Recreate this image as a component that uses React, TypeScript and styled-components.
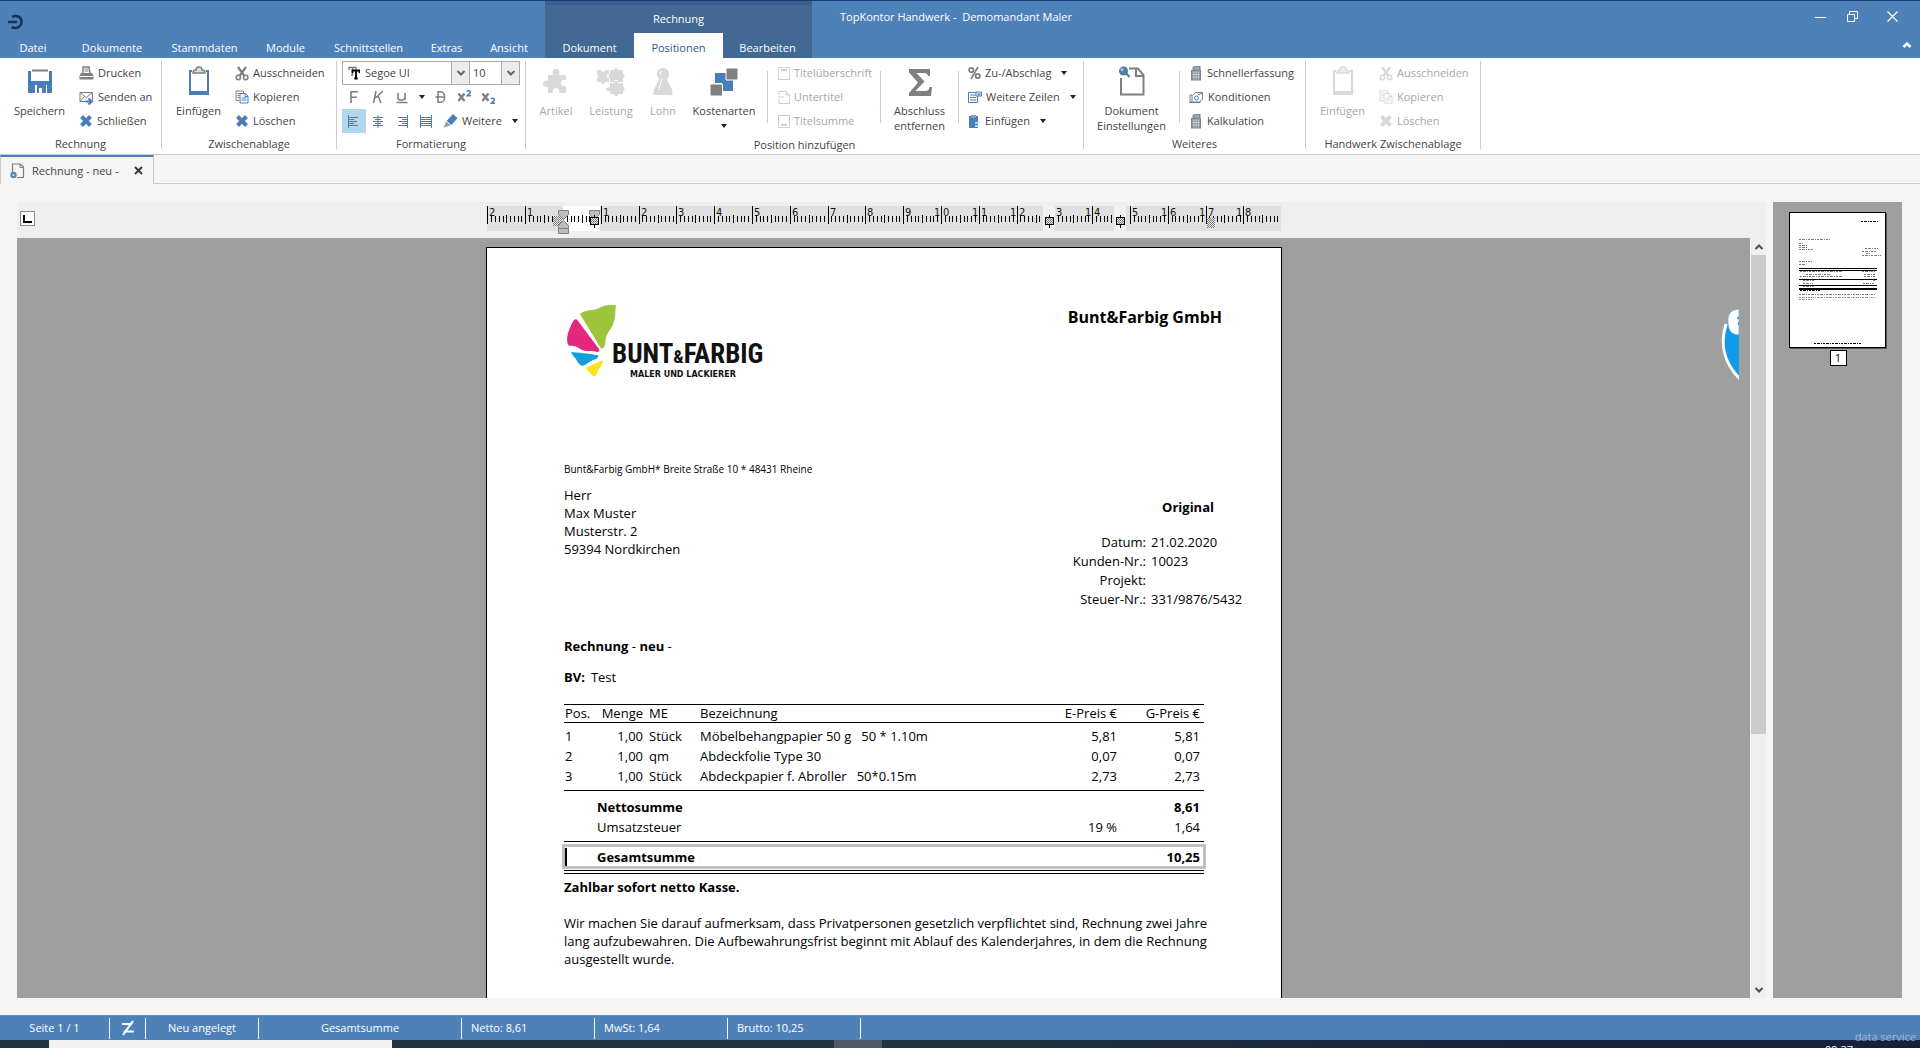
import React from "react";
import styled, { createGlobalStyle, css } from "styled-components";

const color = {
  blue: "#4f81b9",
  blueDark: "#426993",
  accent: "#4a7ebb",
  iconGrey: "#7f7f7f",
  iconOff: "#d9d9d9",
  text: "#444444",
  textOff: "#a6a6a6",
  line: "#cccccc",
  desk: "#9f9f9f",
  shell: "#f5f5f5",
};

const Global = createGlobalStyle`
  *, *::before, *::after { box-sizing: border-box; }
  html, body { margin: 0; overflow: hidden; }
  body, button, select {
    font-family: "Open Sans", "Noto Sans", sans-serif;
    font-size: 11px;
    line-height: 18px;
  }
  button { border: 0; padding: 0; margin: 0; background: none; color: inherit; cursor: default; }
  svg { display: block; flex: none; }
`;

/* ---------- window frame ---------- */

const Shell = styled.div`
  position: relative;
  display: flex;
  flex-direction: column;
  height: 100vh;
  background: ${color.shell};
  color: ${color.text};
`;

const TitleBar = styled.header`
  display: flex;
  flex: none;
  height: 58px;
  background: ${color.blue};
  border-top: 1px solid #143a78;
  color: #fff;
`;

const LeftHead = styled.div`
  display: flex;
  flex-direction: column;
  justify-content: space-between;
  width: 545px;
`;

const AppMark = styled.div`
  padding: 13px 0 0 8px;
`;

const TabRow = styled.nav`
  display: flex;
  height: 25px;
`;

const RibbonTab = styled.button<{ $w: number; $active?: boolean }>`
  width: ${(p) => p.$w}px;
  padding-top: 4px;
  ${(p) => p.$active && css`background: #fff; color: #2b579a;`}
`;

const ContextHead = styled.div`
  display: flex;
  flex-direction: column;
  justify-content: space-between;
  width: 267px;
  background: ${color.blueDark};
  border-top: 4px solid #3b5f8a;
  text-align: center;
`;

const ContextName = styled.div`
  padding-top: 5px;
`;

const WindowTitle = styled.h1`
  flex: 1;
  margin: 0;
  padding: 7px 0 0 28px;
  font-size: 11px;
  line-height: 18px;
  font-weight: 400;
  white-space: pre;
`;

const WindowSide = styled.div`
  display: flex;
  flex-direction: column;
  align-items: flex-end;
  justify-content: space-between;
  padding: 4px 5px 3px 0;
`;

const WindowButtons = styled.div`
  display: flex;
  gap: 8px;
  margin-right: 11px;
`;

const WinButton = styled.button`
  display: grid;
  place-items: center;
  width: 24px;
  height: 22px;
  & + & + & { margin-left: 8px; }
`;

const Collapse = styled(WinButton)`
  width: 16px;
  height: 20px;
`;

/* ---------- ribbon ---------- */

const Ribbon = styled.section`
  display: flex;
  flex: none;
  height: 97px;
  padding: 3px 0 5px;
  background: #fff;
  border-bottom: 1px solid ${color.line};
`;

const Group = styled.div<{ $w: number }>`
  display: flex;
  flex-direction: column;
  width: ${(p) => p.$w}px;
  flex: none;
  border-right: 1px solid ${color.line};
`;

const GroupBody = styled.div`
  display: flex;
  height: 73px;
`;

const GroupName = styled.div`
  margin-top: 2px;
  text-align: center;
  line-height: 18px;
`;

const BigButton = styled.button<{ $w: number }>`
  display: flex;
  flex-direction: column;
  align-items: center;
  width: ${(p) => p.$w}px;
  flex: none;
  padding-top: 4px;
  line-height: 15px;
  &:disabled { color: ${color.textOff}; }
  svg { margin-bottom: 6px; }
`;

const Caption = styled.span`
  white-space: pre-line;
`;

const DropMark = styled.i`
  border: 3px solid transparent;
  border-top: 4px solid #222;
  border-bottom: 0;
`;

const BigDrop = styled(DropMark)`
  margin-top: 6px;
`;

const Stack = styled.div<{ $pad: number }>`
  display: flex;
  flex-direction: column;
  padding-left: ${(p) => p.$pad}px;
  flex: 1;
`;

const SideStack = styled.div`
  display: flex;
  flex-direction: column;
  width: 124px;
  padding-left: 9px;
`;

const SmallButton = styled.button`
  display: flex;
  align-items: center;
  height: 24px;
  gap: 4px;
  white-space: nowrap;
  &:disabled { color: ${color.textOff}; }
  ${DropMark} { margin-left: 6px; }
`;

const Split = styled.div`
  width: 1px;
  height: 52px;
  margin-top: 10px;
  background: ${color.line};
`;

const FormatArea = styled.div`
  display: flex;
  flex-direction: column;
  padding: 0 5px;
  flex: 1;
`;

const FormatRow = styled.div`
  display: flex;
  align-items: center;
  height: 24px;
`;

const Combo = styled.label<{ $w: number; $font?: boolean }>`
  position: relative;
  display: flex;
  align-items: center;
  width: ${(p) => p.$w}px;
  height: 24px;
  border: 1px solid #ababab;
  background: #fff;
  & + & { border-left: 0; }
  > svg:first-child { margin-left: 5px; }
  select {
    flex: 1;
    min-width: 0;
    height: 22px;
    padding: 0 0 0 ${(p) => (p.$font ? 5 : 3)}px;
    border: 0;
    appearance: none;
    background: none;
    color: ${color.text};
    outline: none;
  }
`;

const ComboArrow = styled.span`
  display: grid;
  place-items: center;
  width: 18px;
  height: 22px;
  border-left: 1px solid #ababab;
  background: #ececec;
  pointer-events: none;
`;

const Glyph = styled.button<{ $on?: boolean; $w?: number }>`
  display: grid;
  place-items: center;
  width: ${(p) => p.$w ?? 24}px;
  height: 24px;
  background: ${(p) => (p.$on ? "#b1d6f0" : "none")};
  color: ${color.iconGrey};
`;

/* ---------- document tabs ---------- */

const DocTabs = styled.div`
  display: flex;
  flex: none;
  height: 29px;
  border-bottom: 1px solid ${color.line};
`;

const DocTab = styled.div`
  display: flex;
  align-items: center;
  width: 154px;
  height: 29px;
  padding: 0 10px 0 9px;
  gap: 7px;
  background: ${color.shell};
  border: 1px solid ${color.line};
  border-top: 2px solid ${color.accent};
  border-bottom: 0;
  white-space: nowrap;
  span { flex: 1; }
`;

/* ---------- work area ---------- */

const Work = styled.main`
  display: flex;
  flex: 1;
  min-height: 0;
  gap: 7px;
  padding: 18px 18px 17px 17px;
`;

const Editor = styled.section`
  display: flex;
  flex-direction: column;
  flex: 1;
  min-width: 0;
`;

const RulerBar = styled.div`
  display: grid;
  grid-template-columns: 1fr 796px 1fr;
  flex: none;
  height: 36px;
  padding-right: 15px;
  background: #efefef;
`;

const TabKind = styled.button`
  display: grid;
  place-items: center;
  width: 15px;
  height: 15px;
  margin: 9px 0 0 3px;
  border: 1px solid #8a8a8a;
  background: #fff;
`;

const Desk = styled.div`
  display: flex;
  flex: 1;
  min-height: 0;
`;

const Canvas = styled.div`
  position: relative;
  flex: 1;
  min-width: 0;
  padding: 9px 0 0 1px;
  overflow: hidden;
  background: ${color.desk};
`;

const Bubble = styled.svg`
  position: absolute;
  top: 70px;
  right: 11px;
`;

const Scroll = styled.div`
  display: flex;
  flex-direction: column;
  width: 15px;
  margin-left: 1px;
  background: #efefef;
`;

const ScrollEnd = styled.button`
  display: grid;
  place-items: center;
  height: 17px;
`;

const Track = styled.div`
  flex: 1;
`;

const Thumb = styled.div`
  height: 66%;
  background: #cbcbcb;
`;

const Preview = styled.aside`
  display: flex;
  flex-direction: column;
  align-items: center;
  width: 129px;
  padding: 10px 0 0 1px;
  background: ${color.desk};
`;

const PageNo = styled.div`
  margin-top: 1px;
  width: 17px;
  border: 1px solid #000;
  background: #fff;
  color: #000;
  line-height: 14px;
  text-align: center;
`;

/* ---------- invoice sheet ---------- */

const Sheet = styled.article`
  width: 796px;
  min-height: 1123px;
  margin: 0 auto;
  padding: 56px 59px 0 77px;
  border: 1px solid #000;
  background: #fff;
  color: #000;
  font-size: 13px;
`;

const Letterhead = styled.div`
  display: flex;
  justify-content: space-between;
  height: 76px;
`;

const Company = styled.div`
  padding-top: 4px;
  font-size: 16px;
  font-weight: 700;
`;

const Sender = styled.div`
  margin-top: 80px;
  font-size: 10px;
`;

const Parties = styled.div`
  display: flex;
  justify-content: space-between;
  margin: 8px -18px 0 0;
`;

const Address = styled.address`
  font-style: normal;
`;

const Meta = styled.div`
  width: 166px;
  padding-top: 12px;
`;

const CopyKind = styled.div`
  padding-right: 26px;
  text-align: right;
  font-weight: 700;
`;

const Facts = styled.dl`
  display: grid;
  grid-template-columns: 72px auto;
  column-gap: 5px;
  margin: 17px 0 0;
  line-height: 19px;
  white-space: nowrap;
  dt { text-align: right; justify-self: end; }
  dd { margin: 0; }
`;

const DocTitle = styled.h2`
  margin: 28px 0 13px;
  font-size: 13px;
  line-height: 18px;
  span { font-weight: 400; }
`;

const Project = styled.div`
  b { margin-right: 6px; }
`;

const Items = styled.table`
  width: 640px;
  margin-top: 18px;
  table-layout: fixed;
  border-spacing: 0;
  font-size: 13px;
  th, td { padding: 0; text-align: left; white-space: pre; line-height: 20px; }
  th {
    border: solid #000;
    border-width: 1px 0;
    font-weight: 400;
    line-height: 17px;
  }
  th:first-child, td:first-child { padding-left: 1px; }
  th:nth-child(3), td:nth-child(3) { padding-left: 6px; }
  .num { text-align: right; }
  .end { text-align: right; padding-right: 4px; }
`;

const ItemBody = styled.tbody`
  tr:first-child td { padding-top: 3px; }
  tr:last-child td { padding-bottom: 4px; border-bottom: 1px solid #000; }
`;

const SumBody = styled.tbody`
  tr:first-child td { padding-top: 6px; }
  tr:last-child td { padding-bottom: 4px; border-bottom: 1px solid #000; }
`;

const TotalBody = styled.tbody`
  &::before { content: ""; display: block; height: 4px; }
  tr { outline: 3px solid #c0c0c0; outline-offset: -1px; font-weight: 700; }
  td { height: 21px; line-height: 20px; padding-top: 1px; }
`;

const Strong = styled.tr`
  font-weight: 700;
`;

const Caret = styled.div`
  width: 2px;
  height: 18px;
  background: #000;
`;

const DoubleRule = styled.div`
  width: 640px;
  height: 4px;
  margin-top: 3px;
  border: solid #000;
  border-width: 1px 0;
`;

const Terms = styled.p`
  margin: 4px 0 18px;
  font-weight: 700;
`;

const Notice = styled.p`
  margin: 0;
  white-space: nowrap;
`;

/* ---------- bottom ---------- */

const StatusBar = styled.footer`
  display: flex;
  align-items: center;
  flex: none;
  height: 25px;
  background: ${color.blue};
  border-top: 1px solid #6b8cab;
  color: #fff;
`;

const StatusCell = styled.div<{ $w: number; $left?: boolean }>`
  display: flex;
  align-items: center;
  justify-content: ${(p) => (p.$left ? "flex-start" : "center")};
  width: ${(p) => p.$w}px;
  height: 21px;
  padding-left: ${(p) => (p.$left ? 9 : 0)}px;
  border-right: 1px solid #fff;
`;

const Taskbar = styled.div`
  display: flex;
  flex: none;
  height: 8px;
  overflow: hidden;
  padding-left: 49px;
  background: linear-gradient(90deg, #20353f 45%, #14213f 90%);
`;

const SearchStub = styled.div`
  width: 343px;
  background: #f2f2f2;
`;

const TaskStub = styled.div`
  width: 48px;
  margin-left: 442px;
  background: #4c5b65;
`;

const Clock = styled.div`
  margin: 3px 67px 0 auto;
  color: #fff;
  line-height: 14px;
`;

const Watermark = styled.div`
  position: absolute;
  right: 4px;
  bottom: 2px;
  color: rgba(205, 208, 212, 0.7);
`;

/* ---------- icons ---------- */

const G = color.iconGrey;
const B = color.accent;

const SaveIcon = () => (
  <svg width="26" height="32" viewBox="0 0 26 32">
    <path d="M1 6h3v10h18V6h3v22H1z" fill={B} />
    <path d="M5 5.500h16" stroke={G} strokeWidth="2" />
    <path d="M8 20h12v8H8z" fill="#fff" />
    <path d="M10 20h9v8h-4v-5h-3v5h-2z" fill={B} />
  </svg>
);

const ClipboardIcon = ({ off }: { off?: boolean }) => (
  <svg width="22" height="32" viewBox="0 0 22 32">
    <path d="M4 6H2v21.500h18V6h-2" fill="none" stroke={off ? color.iconOff : B} strokeWidth="2" />
    <path d="M1 26h20v4H1z" fill={off ? color.iconOff : B} />
    <path d="M5 8c0-3 2-3 3-3 0-2 1-3 3-3s3 1 3 3c1 0 3 0 3 3z" fill={off ? "#eee" : "#ddd"} stroke={off ? color.iconOff : G} strokeWidth="1.500" />
  </svg>
);

const PrintIcon = () => (
  <svg width="15" height="15" viewBox="0 0 15 15">
    <path d="M4 7V1h6l1 6" fill="none" stroke={G} strokeWidth="1.500" />
    <path d="M5.500 3h4M5.500 5h4" stroke={G} />
    <path d="M2 7h11l1.500 3v3.500H.5V10z" fill={G} />
    <path d="M1 10.500h13" stroke="#fff" />
  </svg>
);

const MailIcon = () => (
  <svg width="15" height="15" viewBox="0 0 15 15">
    <path d="M1 2.500h12.500v9H1zM1 2.500l6.200 5 6.300-5M1 11.500l4.500-5" fill="none" stroke={G} />
    <path d="M6.500 11.500H12M9.500 8.500l3.500 3-3.500 3" fill="none" stroke={B} strokeWidth="2" />
  </svg>
);

const CrossIcon = ({ off }: { off?: boolean }) => (
  <svg width="14" height="14" viewBox="0 0 14 14">
    <path d="M2.500 2.500l9 9M11.500 2.500l-9 9" stroke={off ? color.iconOff : B} strokeWidth="4" />
  </svg>
);

const CutIcon = ({ off }: { off?: boolean }) => {
  const c = off ? color.iconOff : G;
  return (
    <svg width="14" height="15" viewBox="0 0 14 15" fill="none" stroke={c}>
      <path d="M3 1l6.500 9M11 1L4.500 10" strokeWidth="2.200" />
      <circle cx="3.300" cy="11.500" r="2.200" strokeWidth="1.500" />
      <circle cx="10.700" cy="11.500" r="2.200" strokeWidth="1.500" />
    </svg>
  );
};

const CopyIcon = ({ off }: { off?: boolean }) => (
  <svg width="14" height="14" viewBox="0 0 14 14" fill="none">
    <path d="M8.500 3V1H1v9.500h3" stroke={off ? color.iconOff : G} />
    <path d="M2.500 3.500h2M2.500 5.500h2M2.500 7.500h2" stroke={off ? color.iconOff : B} />
    <path d="M5 3.500h5.500l2.500 2.500v7H5z" stroke={off ? color.iconOff : B} fill="#fff" />
    <path d="M10 3.500V6.500h3M6.500 8h5M6.500 10h5" stroke={off ? color.iconOff : B} />
  </svg>
);

const FontIcon = () => (
  <svg width="12" height="14" viewBox="0 0 12 14">
    <path d="M1 4V1.500h7V4M4.500 1.500V9M3 9h2" fill="none" stroke="#777" strokeWidth="1.300" />
    <path d="M4.500 7V4.500h7V7M8 4.500V12M6.300 12.500h3.400" fill="none" stroke="#000" strokeWidth="1.800" />
  </svg>
);

const Chevron = ({ up, c = "#666", w = 2 }: { up?: boolean; c?: string; w?: number }) => (
  <svg width="10" height="8" viewBox="0 0 10 8">
    <path d={up ? "M1.500 6L5 2.500 8.500 6" : "M1.500 2L5 5.500 8.500 2"} fill="none" stroke={c} strokeWidth={w} />
  </svg>
);

const BoldIcon = () => (
  <svg width="12" height="14" viewBox="0 0 12 14"><path d="M3 13V1.800h7M3 7.200h6" fill="none" stroke={G} strokeWidth="1.600" /></svg>
);
const ItalicIcon = () => (
  <svg width="12" height="14" viewBox="0 0 12 14"><path d="M4 1L1.500 13M11 1L3.500 8M6 6l3 7" fill="none" stroke={G} strokeWidth="1.600" /></svg>
);
const UnderIcon = () => (
  <svg width="12" height="14" viewBox="0 0 12 14"><path d="M2 3v5c0 3 6 3 7 0V3M9 3v7M.5 12.500h11" fill="none" stroke={G} strokeWidth="1.600" /></svg>
);
const StrikeIcon = () => (
  <svg width="12" height="14" viewBox="0 0 12 14"><path d="M3 1.800v10.500h2.500c5.500 0 5.500-10.500 0-10.500zM.5 7h9" fill="none" stroke={G} strokeWidth="1.500" /></svg>
);
const ScriptIcon = ({ low }: { low?: boolean }) => (
  <svg width="15" height="14" viewBox="0 0 15 14" fill="none">
    <path d="M1.500 3.500l6 7.500M7.500 3.500L1.500 11" stroke={G} strokeWidth="2.300" />
    <path d="M0 0c1-1.300 3.500-1 3.300.8C3.200 2 1.300 3 .3 4.300h3.700" transform={low ? "translate(10 9)" : "translate(10 1.500)"} stroke={B} strokeWidth="1.500" />
  </svg>
);

const alignRows: Record<string, number[][]> = {
  left: [[0, 10], [0, 6], [0, 9], [0, 6], [0, 10]],
  center: [[1, 11], [3, 9], [1, 11], [3, 9], [1, 11]],
  right: [[2, 12], [6, 12], [3, 12], [6, 12], [2, 12]],
  block: [[1, 11], [1, 11], [1, 11], [1, 11], [1, 11]],
};
const AlignIcon = ({ kind }: { kind: string }) => (
  <svg width="12" height="13" viewBox="0 0 12 13">
    {alignRows[kind].map(([a, b], i) => (
      <path key={i} d={`M${a} ${2.5 + i * 2}H${b}`} stroke="#6b7580" />
    ))}
    {kind !== "center" && kind !== "right" && <path d="M.5 0v13" stroke={B} />}
    {(kind === "right" || kind === "block") && <path d="M11.500 0v13" stroke={B} />}
    {kind === "center" && <path d="M6 0v13" stroke={B} />}
  </svg>
);

const MarkerIcon = () => (
  <svg width="15" height="14" viewBox="0 0 15 14">
    <path d="M10 0l4.500 4-6 7-4.800-4z" fill={B} />
    <path d="M3.200 7.500l4.500 4L.5 13.500z" fill="#8fa0b3" />
  </svg>
);

const puzzlePiece = "M6 10h5c-1.500-4 0-6 3-6s4 2 3 6h7v5c-4-1-5 1-5 3s2 4 5 3v7h-7c1-4-1-5-3-5s-4 1-3 5H6v-6c-7 1-6-8 0-6z";
const PuzzleIcon = () => (
  <svg width="28" height="32" viewBox="0 0 28 32">
    <path d={puzzlePiece} fill={color.iconOff} />
  </svg>
);
const PuzzlesIcon = () => (
  <svg width="30" height="32" viewBox="0 0 30 32">
    <g fill={color.iconOff}>
      <path d="M1 5h4c0 2 4 2 4 0h4v4c-3 0-3 4 0 4v4H9c0 3-4 3-4 0H1v-4c2 0 2-3 0-3z" />
      <path d="M14 5h4c0-2 4-2 4 0h5v4c2 0 2 4 0 4v4h-5c0-3-4-3-4 0h-4v-4c-2 0-2-4 0-4z" />
      <path d="M14 18h4c0-3 4-3 4 0h5v4c2 0 2 4 0 4v3h-5c0 3-4 3-4 0h-4v-3c-5 1-5-4 0-4z" />
    </g>
  </svg>
);
const PawnIcon = () => (
  <svg width="22" height="32" viewBox="0 0 22 32">
    <path d="M11 3a6 6 0 0 1 4 10.500c0 4 5.500 9 5.500 14V30h-19v-2.500c0-5 5.500-10 5.500-14A6 6 0 0 1 11 3z" fill={color.iconOff} />
    <path d="M7 25c0-4 2.500-7 2.500-11M9 6c-1 1-1 3 0 4" stroke="#fff" fill="none" />
  </svg>
);
const BlocksIcon = () => (
  <svg width="28" height="32" viewBox="0 0 28 32">
    <path d="M5 8h11v10H5zM12 15h11v11H12z" fill={B} />
    <path d="M16 3h12v12H16zM0 19h12.500v12H0z" fill={G} stroke="#fff" />
  </svg>
);
const SigmaIcon = () => (
  <svg width="24" height="32" viewBox="0 0 24 32">
    <path d="M1 4h21v7h-2c-.5-2-1.500-3-4-3H8.500l8 8.500-9 9.500H17c3 0 4-1 4.500-4H24l-1 9H1v-3l9-10.500L1 7.500z" fill={G} />
  </svg>
);
const TitleIcon = ({ kind }: { kind: "top" | "mid" | "low" }) => (
  <svg width="12" height="15" viewBox="0 0 12 15" fill="none" stroke="#cfcfcf">
    {kind === "mid" ? <path d="M1 5V1.500h7l3.500 3.500v8.500H1V9M8 1.500V5h3.500M0 7h6" /> : <path d="M.5 1.500h11v12H.5z" />}
    {kind === "top" && <path d="M3 4h6" strokeWidth="2" />}
    {kind === "low" && <path d="M3 11h6" strokeWidth="2" />}
  </svg>
);
const PercentIcon = () => (
  <svg width="13" height="14" viewBox="0 0 13 14" fill="none" stroke={G}>
    <circle cx="3.300" cy="4" r="2.200" strokeWidth="1.800" />
    <circle cx="9.700" cy="10" r="2.200" strokeWidth="1.800" />
    <path d="M10 1L3 13" strokeWidth="1.600" />
  </svg>
);
const LinesIcon = () => (
  <svg width="14" height="14" viewBox="0 0 14 14" fill="none" stroke={B}>
    <path d="M.5 2.500h9v10h-9zM2 5h6M2 10h6" />
    <path d="M2 7.500h6" stroke={G} />
    <path d="M8 2h5.500v4H8z" fill="#fff" />
    <path d="M9 3.500h4L11 6z" fill={B} stroke="none" />
  </svg>
);
const PasteIcon = () => (
  <svg width="13" height="15" viewBox="0 0 13 15">
    <path d="M1 2h9v12H1z" fill={B} />
    <path d="M3 1h5v3H3z" fill="#8c9bb0" />
    <path d="M7 9h5l-2-2M7 12h5" stroke="#dfe8f4" strokeWidth="1.500" fill="none" />
  </svg>
);
const DocSettingsIcon = () => (
  <svg width="28" height="32" viewBox="0 0 28 32">
    <path d="M3 13v16.500h22.500V10L20 3.500h-9" fill="none" stroke={G} strokeWidth="2" />
    <path d="M18 4v7h7" fill="none" stroke={G} strokeWidth="2" />
    <circle cx="5.500" cy="6" r="4.500" fill="#4f7da8" />
    <circle cx="4" cy="4.500" r="1.500" fill="#b9cde2" />
    <path d="M8 8l3.500 4" stroke="#4f7da8" strokeWidth="2" />
  </svg>
);
const CalcIcon = () => (
  <svg width="14" height="15" viewBox="0 0 14 15">
    <path d="M2 4h10v10.500H2z" fill="#7c858e" />
    <path d="M4 4V1l7-1v4" fill="#9aa2aa" stroke="#7c858e" />
    <path d="M3 6h8M3 8.500h8M3 11h8M5 6v8M7.200 6v8M9.400 6v8" stroke="#fff" strokeWidth=".5" />
  </svg>
);
const TermsIcon = () => (
  <svg width="15" height="14" viewBox="0 0 15 14" fill="none" stroke={G}>
    <path d="M1 5h2v7H1zM3.500 5.500l3-3h7v7l-3 2.500h-7" />
    <circle cx="7.500" cy="8" r="2" stroke={B} />
    <path d="M9 5l4.500-2M.5 12.500h11" stroke={B} />
  </svg>
);
const PageIcon = () => (
  <svg width="15" height="16" viewBox="0 0 15 16">
    <path d="M2.500 9V1h8l3 3v10.500H7" fill="none" stroke={G} strokeWidth="1.200" />
    <path d="M10 1v3.500h3.500" fill="none" stroke={G} />
    <circle cx="3.500" cy="12" r="3.200" fill="#5b86ad" />
    <circle cx="3.500" cy="12" r="1" fill="#dfe8f0" />
  </svg>
);

/* ---------- drawings ---------- */

const CM = 37.8;
const RULER_ZERO = 77;

const Ruler = () => {
  const ticks: React.ReactNode[] = [];
  for (let i = -20; i <= 190; i++) {
    const x = Math.round(RULER_ZERO + (i * CM) / 10) + 0.5;
    if (x < 1 || x > 792) continue;
    const major = i % 10 === 0;
    if (i === 0 || (i > 126 && i < 131) || (i > 145 && i < 150)) continue;
    const d = major ? "4V22" : i % 5 === 0 ? "13V21" : "14V20";
    ticks.push(<path key={i} d={`M${x} ${d}`} stroke="#000" />);
  }
  const labels: React.ReactNode[] = [];
  for (let n = -2; n <= 18; n++) {
    if (n === 0) continue;
    const x = Math.round(RULER_ZERO + n * CM);
    const s = String(Math.abs(n));
    const hidden = n === 13 || n === 15;
    labels.push(
      <text key={n} y="14">
        {s.length > 1 && !hidden && <tspan x={x - 7}>{s[0]}</tspan>}
        <tspan x={x + 2}>{s[s.length - 1]}</tspan>
      </text>
    );
  }
  return (
    <svg width="796" height="36" viewBox="0 0 796 36" fontFamily="DejaVu Sans Condensed, DejaVu Sans, sans-serif" fontSize="11" fill="#111">
      <defs>
        <pattern id="dither" width="2" height="2" patternUnits="userSpaceOnUse">
          <rect width="2" height="2" fill="#eee" />
          <rect width="1" height="1" fill="#777" />
          <rect x="1" y="1" width="1" height="1" fill="#777" />
        </pattern>
      </defs>
      <rect x="1" y="4" width="794" height="25" fill="#e0e0e0" />
      <rect x="77" y="4" width="37" height="25" fill="#fff" />
      <rect x="557" y="4" width="12" height="25" fill="#f2f2f2" />
      <rect x="628" y="4" width="12" height="25" fill="#f2f2f2" />
      {ticks}
      {labels}
      <rect x="67" y="14" width="9" height="10" fill="url(#dither)" />
      <g fill="#bdbdbd" stroke="#808080">
        <path d="M72.500 8.500h10v4l-5 5-5-5z" />
        <path d="M77.500 18.500l5 5v3h-10v-3zM72.500 26.500h10v5h-10z" />
        <path d="M103.500 8.500h10v4l-5 5-5-5z" />
      </g>
      {[108, 563, 634].map((x) => (
        <g key={x}>
          <path d={`M${x + 0.5} 13V26`} stroke="#000" />
          <rect x={x - 3.5} y="15.500" width="8" height="7" fill="url(#dither)" stroke="#000" />
        </g>
      ))}
      <rect x="721" y="16" width="8" height="10" fill="url(#dither)" />
    </svg>
  );
};

const Logo = () => (
  <svg width="204" height="76" viewBox="0 0 204 76" role="img" aria-label="Bunt&amp;Farbig Maler und Lackierer">
    <path d="M16 10c4-3 8-4 12-4 6 0 10-5 18-5h6c-1 6 0 10-2 16-1 6-5 9-7 14-2 4-1 9-3 12-1 2-3 2-4 0z" fill="#9cc53b" />
    <path d="M10 16c1-1 3-1 4 1l21 28c1 2 0 3-2 3-5-2-10 0-15-2-5-3-8-5-12-4-4-1-3-9-2-13 2-5 3-9 6-13z" fill="#e5287f" />
    <path d="M7 48c8 1 15 1 25 3 3 0 3 2 0 4-4 1-7 3-11 6-4 2-6-1-8-4-2-4-5-6-6-9z" fill="#129fdc" />
    <path d="M39 56c-1 6-4 9-6 13-1 4-3 4-5 2-2-3-5-4-6-7 5-3 11-5 17-8z" fill="#fbe01c" />
    <text x="48" y="59" fontFamily="Liberation Sans Narrow, Roboto Condensed, DejaVu Sans Condensed, sans-serif" fontWeight="700" fontSize="27" fill="#111">BUNT<tspan fontSize="18">&amp;</tspan>FARBIG</text>
    <text x="66" y="73" fontFamily="DejaVu Sans, sans-serif" fontWeight="700" fontSize="8" fill="#111">MALER UND LACKIERER</text>
  </svg>
);

const MiniPage = () => (
  <svg width="98" height="137" viewBox="0 0 98 137">
    <rect x="1" y="1" width="97" height="136" fill="#555" />
    <rect x=".5" y=".5" width="96" height="135" fill="#fff" stroke="#000" />
    <g stroke="#444" strokeDasharray="2 1 3 1 1 1">
      <path d="M72 9.500h17" stroke="#000" />
      <path d="M10 27.500h31M10 31.500h4M10 33.500h9M10 35.500h8M10 37.500h14M76 36.500h13M73 39.500h14M77 41.500h4M73 43.500h19M10 49.500h13M10 52.500h7" strokeWidth=".7" />
      <path d="M11 59.500h43M73 59.500h13M17 62.500h24M75 62.500h12M11 64.500h42M75 64.500h12M14 68.500h11M84 68.500h3M14 71.500h10M74 71.500h12M14 74.500h11" strokeWidth=".7" />
      <path d="M11 78.500h20" stroke="#000" />
      <path d="M10 82.500h76" strokeWidth=".7" />
      <path d="M10 85.500h76M10 87.500h13" stroke="#8c4a5a" strokeWidth=".7" />
      <path d="M25 131.500h48" stroke="#000" />
    </g>
    <path d="M10 56.500h78M10 58.500h78M10 67.500h78M10 73.500h78" stroke="#000" />
    <path d="M10 77h78" stroke="#000" strokeWidth="2" />
  </svg>
);

const BubbleArt = () => (
  <Bubble width="18" height="72" viewBox="0 0 18 72">
    <path d="M7 17C-2 38 5 57 18 70V18z" fill="#0f9aea" />
    <path d="M5 16C-2 38 5 57 19 71" fill="none" stroke="#fff" strokeWidth="3" />
    <path d="M18 1c-8 0-12 6-11 13 0 9 4 13 11 13z" fill="#fff" stroke="#4ba7de" strokeWidth=".8" />
    <path d="M18 9l-2 1 2 1M18 14l-1 2 1 1" fill="none" stroke="#0f9aea" />
  </Bubble>
);

/* ---------- data ---------- */

const mainTabs: [string, number][] = [
  ["Datei", 66], ["Dokumente", 92], ["Stammdaten", 93], ["Module", 69],
  ["Schnittstellen", 97], ["Extras", 59], ["Ansicht", 66],
];

const items = [
  ["1", "1,00", "Stück", "Möbelbehangpapier 50 g   50 * 1.10m", "5,81", "5,81"],
  ["2", "1,00", "qm", "Abdeckfolie Type 30", "0,07", "0,07"],
  ["3", "1,00", "Stück", "Abdeckpapier f. Abroller   50*0.15m", "2,73", "2,73"],
];

const numeric = (i: number) => (i === 1 || i === 4 ? "num" : i === 5 ? "end" : undefined);

export default function App() {
  return (
    <Shell>
      <Global />
      <TitleBar>
        <LeftHead>
          <AppMark>
            <svg width="16" height="16" viewBox="0 0 16 16" fill="none" stroke="#123355" strokeWidth="2.500">
              <path d="M4 2.800C9 .5 14 3.500 13.500 8.500 13 13 8 15.500 3.500 13.200" />
              <path d="M0 8h9" />
            </svg>
          </AppMark>
          <TabRow>
            {mainTabs.map(([name, w]) => <RibbonTab key={name} $w={w}>{name}</RibbonTab>)}
          </TabRow>
        </LeftHead>
        <ContextHead>
          <ContextName>Rechnung</ContextName>
          <TabRow>
            <RibbonTab $w={89}>Dokument</RibbonTab>
            <RibbonTab $w={89} $active>Positionen</RibbonTab>
            <RibbonTab $w={89}>Bearbeiten</RibbonTab>
          </TabRow>
        </ContextHead>
        <WindowTitle>{"TopKontor Handwerk -  Demomandant Maler"}</WindowTitle>
        <WindowSide>
          <WindowButtons>
            <WinButton aria-label="Minimieren">
              <svg width="11" height="11"><path d="M0 6.500h11" stroke="#fff" /></svg>
            </WinButton>
            <WinButton aria-label="Wiederherstellen">
              <svg width="11" height="11" fill="none" stroke="#fff"><path d="M.5 3.500h7v7h-7zM2.500 3V.5h8v7H8" /></svg>
            </WinButton>
            <WinButton aria-label="Schließen">
              <svg width="11" height="11"><path d="M.5.5l10 10M10.500.5l-10 10" stroke="#fff" strokeWidth="1.200" /></svg>
            </WinButton>
          </WindowButtons>
          <Collapse aria-label="Menüband reduzieren"><Chevron up c="#fff" w={2.5} /></Collapse>
        </WindowSide>
      </TitleBar>

      <Ribbon>
        <Group $w={162}>
          <GroupBody>
            <BigButton $w={79}><SaveIcon /><Caption>Speichern</Caption></BigButton>
            <Stack $pad={0}>
              <SmallButton><PrintIcon />Drucken</SmallButton>
              <SmallButton><MailIcon />Senden an</SmallButton>
              <SmallButton><CrossIcon />Schließen</SmallButton>
            </Stack>
          </GroupBody>
          <GroupName>Rechnung</GroupName>
        </Group>

        <Group $w={175}>
          <GroupBody>
            <BigButton $w={73}><ClipboardIcon /><Caption>Einfügen</Caption></BigButton>
            <Stack $pad={0}>
              <SmallButton><CutIcon />Ausschneiden</SmallButton>
              <SmallButton><CopyIcon />Kopieren</SmallButton>
              <SmallButton><CrossIcon />Löschen</SmallButton>
            </Stack>
          </GroupBody>
          <GroupName>Zwischenablage</GroupName>
        </Group>

        <Group $w={189}>
          <GroupBody>
            <FormatArea>
              <FormatRow>
                <Combo $w={128} $font>
                  <FontIcon />
                  <select aria-label="Schriftart"><option>Segoe UI</option></select>
                  <ComboArrow><Chevron /></ComboArrow>
                </Combo>
                <Combo $w={50}>
                  <select aria-label="Schriftgröße"><option>10</option></select>
                  <ComboArrow><Chevron /></ComboArrow>
                </Combo>
              </FormatRow>
              <FormatRow>
                <Glyph aria-label="Fett"><BoldIcon /></Glyph>
                <Glyph aria-label="Kursiv"><ItalicIcon /></Glyph>
                <Glyph aria-label="Unterstrichen"><UnderIcon /></Glyph>
                <Glyph $w={16} aria-label="Unterstreichungsart"><DropMark /></Glyph>
                <Glyph $w={22} aria-label="Durchgestrichen"><StrikeIcon /></Glyph>
                <Glyph aria-label="Hochgestellt"><ScriptIcon /></Glyph>
                <Glyph aria-label="Tiefgestellt"><ScriptIcon low /></Glyph>
              </FormatRow>
              <FormatRow>
                <Glyph $on aria-label="Linksbündig"><AlignIcon kind="left" /></Glyph>
                <Glyph aria-label="Zentriert"><AlignIcon kind="center" /></Glyph>
                <Glyph aria-label="Rechtsbündig"><AlignIcon kind="right" /></Glyph>
                <Glyph aria-label="Blocksatz"><AlignIcon kind="block" /></Glyph>
                <Stack $pad={5}><SmallButton><MarkerIcon />Weitere<DropMark /></SmallButton></Stack>
              </FormatRow>
            </FormatArea>
          </GroupBody>
          <GroupName>Formatierung</GroupName>
        </Group>

        <Group $w={558}>
          <GroupBody>
            <BigButton $w={60} disabled><PuzzleIcon /><Caption>Artikel</Caption></BigButton>
            <BigButton $w={50} disabled><PuzzlesIcon /><Caption>Leistung</Caption></BigButton>
            <BigButton $w={54} disabled><PawnIcon /><Caption>Lohn</Caption></BigButton>
            <BigButton $w={68}><BlocksIcon /><Caption>Kostenarten</Caption><BigDrop /></BigButton>
            <Stack $pad={9}>
              <GroupBody>
                <Split />
                <Stack $pad={10}>
                  <SmallButton disabled><TitleIcon kind="top" />Titelüberschrift</SmallButton>
                  <SmallButton disabled><TitleIcon kind="mid" />Untertitel</SmallButton>
                  <SmallButton disabled><TitleIcon kind="low" />Titelsumme</SmallButton>
                </Stack>
              </GroupBody>
            </Stack>
            <Split />
            <BigButton $w={77}><SigmaIcon /><Caption>{"Abschluss\nentfernen"}</Caption></BigButton>
            <Split />
            <SideStack>
              <SmallButton><PercentIcon />Zu-/Abschlag<DropMark /></SmallButton>
              <SmallButton><LinesIcon />Weitere Zeilen<DropMark /></SmallButton>
              <SmallButton><PasteIcon />Einfügen<DropMark /></SmallButton>
            </SideStack>
          </GroupBody>
          <GroupName>Position hinzufügen</GroupName>
        </Group>

        <Group $w={222}>
          <GroupBody>
            <BigButton $w={95}><DocSettingsIcon /><Caption>{"Dokument\nEinstellungen"}</Caption></BigButton>
            <Split />
            <Stack $pad={9}>
              <SmallButton><CalcIcon />Schnellerfassung</SmallButton>
              <SmallButton><TermsIcon />Konditionen</SmallButton>
              <SmallButton><CalcIcon />Kalkulation</SmallButton>
            </Stack>
          </GroupBody>
          <GroupName>Weiteres</GroupName>
        </Group>

        <Group $w={175}>
          <GroupBody>
            <BigButton $w={73} disabled><ClipboardIcon off /><Caption>Einfügen</Caption></BigButton>
            <Stack $pad={0}>
              <SmallButton disabled><CutIcon off />Ausschneiden</SmallButton>
              <SmallButton disabled><CopyIcon off />Kopieren</SmallButton>
              <SmallButton disabled><CrossIcon off />Löschen</SmallButton>
            </Stack>
          </GroupBody>
          <GroupName>Handwerk Zwischenablage</GroupName>
        </Group>
      </Ribbon>

      <DocTabs>
        <DocTab>
          <PageIcon />
          <span>Rechnung - neu -</span>
          <button aria-label="Dokument schließen">
            <svg width="9" height="9"><path d="M1 1l7 7M8 1L1 8" stroke="#333" strokeWidth="1.800" /></svg>
          </button>
        </DocTab>
      </DocTabs>

      <Work>
        <Editor>
          <RulerBar>
            <TabKind aria-label="Tabstopp links">
              <svg width="9" height="9"><path d="M1 1v7h8" fill="none" stroke="#000" strokeWidth="2" /></svg>
            </TabKind>
            <Ruler />
          </RulerBar>
          <Desk>
            <Canvas>
              <Sheet>
                <Letterhead>
                  <Logo />
                  <Company>Bunt&amp;Farbig GmbH</Company>
                </Letterhead>
                <Sender>Bunt&amp;Farbig GmbH* Breite Straße 10 * 48431 Rheine</Sender>
                <Parties>
                  <Address>Herr<br />Max Muster<br />Musterstr. 2<br />59394 Nordkirchen</Address>
                  <Meta>
                    <CopyKind>Original</CopyKind>
                    <Facts>
                      <dt>Datum:</dt><dd>21.02.2020</dd>
                      <dt>Kunden-Nr.:</dt><dd>10023</dd>
                      <dt>Projekt:</dt><dd />
                      <dt>Steuer-Nr.:</dt><dd>331/9876/5432</dd>
                    </Facts>
                  </Meta>
                </Parties>
                <DocTitle>Rechnung <span>-</span> neu <span>-</span></DocTitle>
                <Project><b>BV:</b>Test</Project>
                <Items>
                  <colgroup>
                    <col width="33" /><col width="46" /><col width="57" /><col /><col width="77" /><col width="87" />
                  </colgroup>
                  <thead>
                    <tr>
                      <th>Pos.</th><th className="num">Menge</th><th>ME</th><th>Bezeichnung</th>
                      <th className="num">E-Preis €</th><th className="end">G-Preis €</th>
                    </tr>
                  </thead>
                  <ItemBody>
                    {items.map((row) => (
                      <tr key={row[0]}>{row.map((cell, i) => <td key={i} className={numeric(i)}>{cell}</td>)}</tr>
                    ))}
                  </ItemBody>
                  <SumBody>
                    <Strong><td /><td colSpan={3}>Nettosumme</td><td /><td className="end">8,61</td></Strong>
                    <tr><td /><td colSpan={3}>Umsatzsteuer</td><td className="num">19 %</td><td className="end">1,64</td></tr>
                  </SumBody>
                  <TotalBody>
                    <tr><td><Caret /></td><td colSpan={3}>Gesamtsumme</td><td /><td className="end">10,25</td></tr>
                  </TotalBody>
                </Items>
                <DoubleRule />
                <Terms>Zahlbar sofort netto Kasse.</Terms>
                <Notice>
                  Wir machen Sie darauf aufmerksam, dass Privatpersonen gesetzlich verpflichtet sind, Rechnung zwei Jahre<br />
                  lang aufzubewahren. Die Aufbewahrungsfrist beginnt mit Ablauf des Kalenderjahres, in dem die Rechnung<br />
                  ausgestellt wurde.
                </Notice>
              </Sheet>
              <BubbleArt />
            </Canvas>
            <Scroll>
              <ScrollEnd aria-label="Nach oben"><Chevron up c="#505050" /></ScrollEnd>
              <Track><Thumb /></Track>
              <ScrollEnd aria-label="Nach unten"><Chevron c="#505050" /></ScrollEnd>
            </Scroll>
          </Desk>
        </Editor>
        <Preview>
          <MiniPage />
          <PageNo>1</PageNo>
        </Preview>
      </Work>

      <StatusBar>
        <StatusCell $w={110}>Seite 1 / 1</StatusCell>
        <StatusCell $w={36}>
          <svg width="14" height="16" viewBox="0 0 14 16" fill="none" stroke="#fff" strokeWidth="2">
            <path d="M1 4h9L4 11.500h9M12 1L2 15" />
          </svg>
        </StatusCell>
        <StatusCell $w={113}>Neu angelegt</StatusCell>
        <StatusCell $w={203}>Gesamtsumme</StatusCell>
        <StatusCell $w={133} $left>Netto: 8,61</StatusCell>
        <StatusCell $w={133} $left>MwSt: 1,64</StatusCell>
        <StatusCell $w={133} $left>Brutto: 10,25</StatusCell>
      </StatusBar>
      <Taskbar>
        <SearchStub />
        <TaskStub />
        <Clock>09:37</Clock>
      </Taskbar>
      <Watermark>data service</Watermark>
    </Shell>
  );
}
